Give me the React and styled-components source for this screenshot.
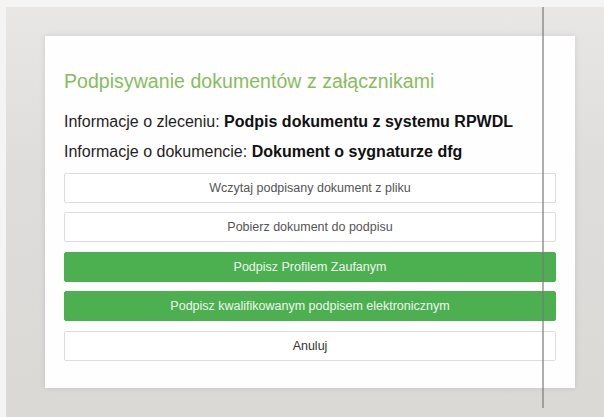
import React from 'react';
import styled, { createGlobalStyle } from 'styled-components';

const GlobalStyle = createGlobalStyle`
  html, body {
    margin: 0;
    padding: 0;
    background: #f4f4f4;
  }
  body {
    font-family: "Liberation Sans", Arial, sans-serif;
  }
`;

const Page = styled.div`
  width: 604px;
  height: 417px;
  box-sizing: border-box;
  padding: 7px 0 0 6px;
  background: #f4f4f4;
  position: relative;
  overflow: hidden;
`;

const Backdrop = styled.div`
  height: 100%;
  box-sizing: border-box;
  padding: 29px 0 0 39px;
  background: linear-gradient(180deg, #e9e7e5 0%, #dfdddb 40%, #dbd9d6 100%);
`;

const Card = styled.div`
  width: 530px;
  height: 352px;
  box-sizing: border-box;
  padding: 33px 19px 0;
  background: #fefefe;
  box-shadow: 0 0 6px rgba(0, 0, 0, 0.1);
  display: flex;
  flex-direction: column;
`;

const Title = styled.h2`
  margin: 0;
  font-size: 19.5px;
  line-height: 24px;
  font-weight: normal;
  letter-spacing: 0.05px;
  color: #86bd5c;
`;

const InfoLine = styled.p`
  margin: ${p => p.$top}px 0 0;
  font-size: 16px;
  line-height: 20px;
  color: #1f1f1f;

  b {
    color: #111;
  }
`;

const Actions = styled.div`
  margin-top: 11px;
  display: flex;
  flex-direction: column;
  gap: 9.5px;
`;

const Button = styled.button`
  height: 30px;
  width: 100%;
  box-sizing: border-box;
  border: 1px solid ${p => (p.$primary ? '#4caf50' : '#dddddd')};
  border-radius: 2px;
  background: ${p => (p.$primary ? '#4caf50' : '#ffffff')};
  color: ${p => (p.$primary ? '#eef8ee' : p.$strong ? '#333' : '#555')};
  font-family: "Liberation Sans", Arial, sans-serif;
  font-size: 12.5px;
  padding: 0;
  cursor: pointer;
`;

const Divider = styled.div`
  position: absolute;
  left: 542px;
  top: 7px;
  width: 2px;
  height: 401px;
  background: rgba(120, 120, 120, 0.6);
`;

export default function App() {
  return (
    <>
      <GlobalStyle />
      <Page>
        <Backdrop>
          <Card>
            <Title>Podpisywanie dokumentów z załącznikami</Title>
            <InfoLine $top={18.7}>
              Informacje o zleceniu: <b>Podpis dokumentu z systemu RPWDL</b>
            </InfoLine>
            <InfoLine $top={10}>
              Informacje o dokumencie: <b>Dokument o sygnaturze dfg</b>
            </InfoLine>
            <Actions>
              <Button>Wczytaj podpisany dokument z pliku</Button>
              <Button>Pobierz dokument do podpisu</Button>
              <Button $primary>Podpisz Profilem Zaufanym</Button>
              <Button $primary>Podpisz kwalifikowanym podpisem elektronicznym</Button>
              <Button $strong>Anuluj</Button>
            </Actions>
          </Card>
        </Backdrop>
        <Divider />
      </Page>
    </>
  );
}
